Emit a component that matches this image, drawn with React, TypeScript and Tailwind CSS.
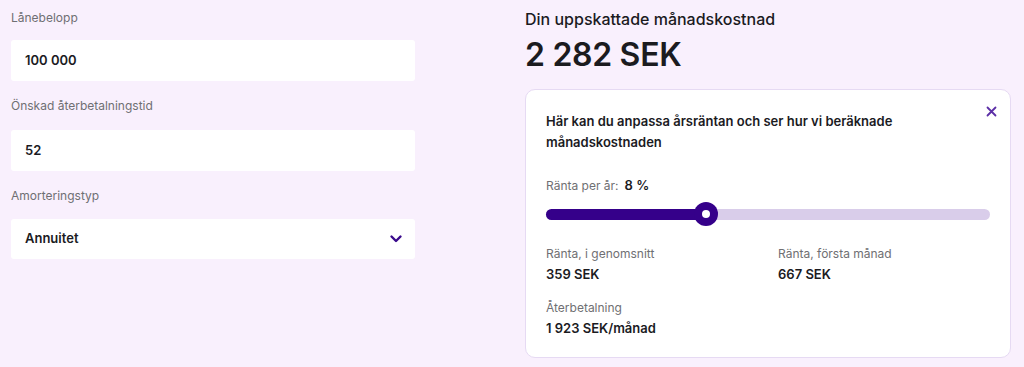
import React from "react";

function Field({ label, children, top, gap }: { label: string; children: React.ReactNode; top: string; gap: string }) {
  return (
    <div className={top}>
      <div className="text-[12px] leading-4 text-[#6f6f73]">{label}</div>
      <div className={gap}>{children}</div>
    </div>
  );
}

export default function App() {
  const pct = 36;
  return (
    <div
      className="w-[1024px] h-[367px] bg-[#f9f0fd] flex text-[#1b1b1f] overflow-hidden"
      style={{ fontFamily: "Inter, 'Noto Sans', sans-serif" }}
    >
      <div className="w-[404px] ml-[11px] pt-[10px]">
        <Field label="Lånebelopp" top="" gap="mt-[14px]">
          <div className="h-[41px] bg-white rounded-[3px] flex items-center px-[14px] text-[13px] font-semibold">100 000</div>
        </Field>
        <Field label="Önskad återbetalningstid" top="mt-[17px]" gap="mt-[16px]">
          <div className="h-[41px] bg-white rounded-[3px] flex items-center px-[14px] text-[13px] font-semibold">52</div>
        </Field>
        <Field label="Amorteringstyp" top="mt-[17px]" gap="mt-[15px]">
          <div className="h-[40px] bg-white rounded-[3px] flex items-center justify-between pl-[14px] pr-[12px] text-[13px] font-semibold">
            <span>Annuitet</span>
            <svg width="14" height="10" viewBox="0 0 14 10" fill="none">
              <path d="M2.5 2.5 L7 7 L11.5 2.5" stroke="#3a0a8c" strokeWidth="2.4" strokeLinecap="round" strokeLinejoin="round" />
            </svg>
          </div>
        </Field>
      </div>

      <div className="w-[486px] ml-[110px] pt-[7px]">
        <div className="text-[16px] leading-6 font-medium">Din uppskattade månadskostnad</div>
        <div className="text-[32px] leading-10 font-semibold mt-[4px] tracking-[-0.3px]">2 282 SEK</div>
        <div className="mt-[14px] bg-white border border-[#e6daf3] rounded-[10px] px-[20px] pt-[21px] pb-[21px] relative">
          <button className="absolute right-[12px] top-[14px] w-[14px] h-[14px] flex items-center justify-center">
            <svg width="11" height="11" viewBox="0 0 11 11" fill="none">
              <path d="M1.5 1.5 L9.5 9.5 M9.5 1.5 L1.5 9.5" stroke="#5b2ea6" strokeWidth="1.8" strokeLinecap="round" />
            </svg>
          </button>
          <div className="text-[13px] leading-[21px] font-semibold pr-[40px] w-[400px]">
            Här kan du anpassa årsräntan och ser hur vi beräknade månadskostnaden
          </div>
          <div className="mt-[24px] flex items-center gap-[6px] h-[18px]">
            <span className="text-[12px] text-[#6f6f73]">Ränta per år:</span>
            <span className="text-[13px] font-semibold">8 %</span>
          </div>
          <div className="mt-[7px] relative h-[24px] flex items-center">
            <div className="w-full h-[11px] rounded-full bg-[#d9cdea]" />
            <div className="absolute left-0 h-[11px] rounded-full bg-[#35008a]" style={{ width: `${pct}%` }} />
            <div
              className="absolute w-[24px] h-[24px] rounded-full bg-[#35008a] flex items-center justify-center -translate-x-1/2"
              style={{ left: `${pct}%` }}
            >
              <div className="w-[8px] h-[8px] rounded-full bg-white" />
            </div>
          </div>
          <div className="mt-[20px] grid grid-cols-2 gap-x-5 gap-y-[18px]">
            <div>
              <div className="text-[12px] leading-4 text-[#6f6f73]">Ränta, i genomsnitt</div>
              <div className="text-[13px] leading-4 font-semibold mt-[4px]">359 SEK</div>
            </div>
            <div>
              <div className="text-[12px] leading-4 text-[#6f6f73]">Ränta, första månad</div>
              <div className="text-[13px] leading-4 font-semibold mt-[4px]">667 SEK</div>
            </div>
            <div>
              <div className="text-[12px] leading-4 text-[#6f6f73]">Återbetalning</div>
              <div className="text-[13px] leading-4 font-semibold mt-[4px]">1 923 SEK/månad</div>
            </div>
          </div>
        </div>
      </div>
    </div>
  );
}
